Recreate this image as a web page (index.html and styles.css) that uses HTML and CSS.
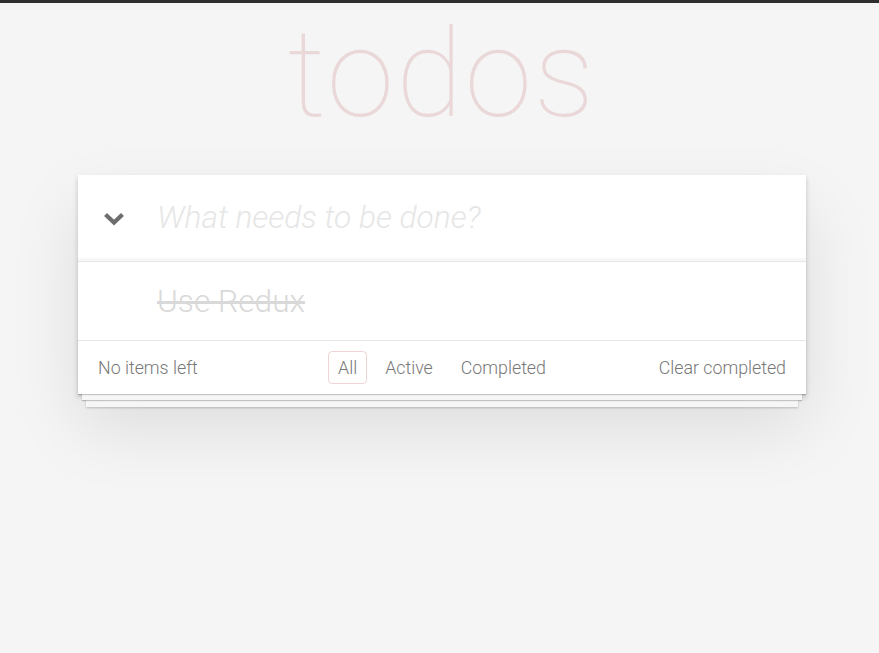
FILE: index.html
```html
<!DOCTYPE html>
<html lang="en">
<head>
<meta charset="utf-8">
<title>Redux TodoMVC</title>
<link rel="stylesheet" href="styles.css">
</head>
<body>
<div class="topbar"></div>
<section class="page">
  <h1 class="title">todos</h1>
  <div class="todoapp">
    <header class="new-row">
      <span class="toggle-all">
        <svg width="22" height="14" viewBox="0 0 22 14"><polyline points="2.5,2.5 11,10.5 19.5,2.5" fill="none" stroke="#6e6e6e" stroke-width="4.2" stroke-linejoin="miter"/></svg>
      </span>
      <div class="new-todo">What needs to be done?</div>
    </header>
    <ul class="todo-list">
      <li class="todo completed"><span class="label">Use Redux</span></li>
    </ul>
    <footer class="footer">
      <span class="count">No items left</span>
      <ul class="filters">
        <li><a class="filter selected">All</a></li>
        <li><a class="filter">Active</a></li>
        <li><a class="filter">Completed</a></li>
      </ul>
      <span class="clear">Clear completed</span>
    </footer>
  </div>
</section>
</body>
</html>
```
FILE: styles.css
```css
html, body {
  margin: 0;
  padding: 0;
}
body {
  background: #f5f5f5;
  font-family: Roboto, "Liberation Sans", sans-serif;
  font-weight: 300;
  color: #4d4d4d;
  height: 653px;
  overflow: hidden;
}
.topbar {
  height: 3px;
  background: #2e2e2e;
}
.page {
  width: 728px;
  margin-left: 78px;
}
.title {
  margin: 0;
  height: 172px;
  font-size: 122px;
  font-weight: 100;
  line-height: 144px;
  text-align: center;
  color: rgba(175, 47, 47, 0.15);
  letter-spacing: 2px;
}
.todoapp {
  background: #fff;
  box-shadow: 0 3px 5px 0 rgba(0, 0, 0, 0.2), 0 33px 66px 0 rgba(0, 0, 0, 0.1);
}
.new-row {
  display: flex;
  align-items: center;
  height: 86px;
  box-shadow: inset 0 -3px 1px rgba(0, 0, 0, 0.03);
}
.toggle-all {
  box-sizing: border-box;
  width: 79px;
  padding-right: 8px;
  padding-top: 2px;
  display: flex;
  justify-content: center;
}
.new-todo {
  font-size: 31.7px;
  font-style: italic;
  font-weight: 300;
  color: #e6e6e6;
  line-height: 44px;
}
.todo-list {
  list-style: none;
  margin: 0;
  padding: 0;
  border-top: 1px solid #e6e6e6;
}
.todo {
  height: 78px;
  display: flex;
  align-items: center;
  padding-left: 79px;
  font-size: 31.7px;
}
.todo.completed .label {
  color: #d9d9d9;
  text-decoration: line-through;
}
.footer {
  display: grid;
  grid-template-columns: 1fr auto 1fr;
  align-items: center;
  height: 53px;
  padding: 0 20px;
  border-top: 1px solid #e6e6e6;
  color: #777;
  font-size: 17.8px;
  box-shadow: 0 1px 1px rgba(0, 0, 0, 0.2),
    0 10px 0 -4px #f6f6f6,
    0 11px 1px -4px rgba(0, 0, 0, 0.2),
    0 21px 0 -8px #f6f6f6,
    0 22px 2px -8px rgba(0, 0, 0, 0.2);
}
.count {
  justify-self: start;
}
.filters {
  list-style: none;
  margin: 0;
  padding: 0;
  display: flex;
  gap: 8px;
}
.filter {
  display: block;
  padding: 5px 9px;
  border: 1px solid transparent;
  border-radius: 4px;
  line-height: 21px;
  color: #777;
}
.filter.selected {
  border-color: rgba(175, 47, 47, 0.2);
}
.clear {
  justify-self: end;
}
```
